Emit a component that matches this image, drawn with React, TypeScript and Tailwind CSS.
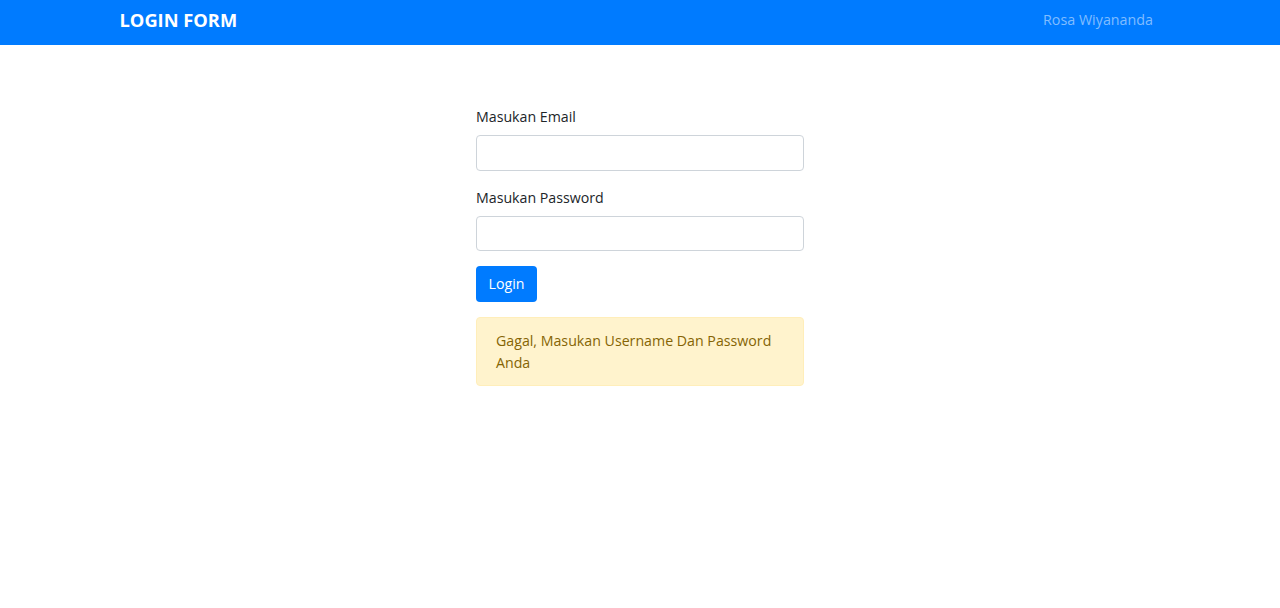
import React from "react";

export default function App() {
  return (
    <div className="min-h-[608px] bg-white text-[#212529] text-[14.2px] leading-[22.5px]" style={{ fontFamily: '"Open Sans", "Noto Sans", sans-serif' }}>
      <nav className="h-[45px] bg-[#007bff]">
        <div className="mx-auto flex h-full w-[1069px] items-center justify-between px-[14px] pb-[5px]">
          <span className="text-[18.3px] font-bold text-white">LOGIN FORM</span>
          <span className="px-[7.5px] text-[14.3px] text-[#80bdff]">Rosa Wiyananda</span>
        </div>
      </nav>
      <div className="flex justify-center pt-[60px]">
        <div className="w-[328px]">
          <div className="mb-[15px]">
            <label className="mb-[6.5px] block pt-[1px]">Masukan Email</label>
            <input type="email" className="block h-[35.6px] w-full rounded-[4px] border border-[#ced4da] bg-white px-[11px] outline-none" />
          </div>
          <div className="mb-[15px]">
            <label className="mb-[6.5px] block pt-[1px]">Masukan Password</label>
            <input type="password" className="block h-[35.6px] w-full rounded-[4px] border border-[#ced4da] bg-white px-[11px] outline-none" />
          </div>
          <button className="mb-[15px] block h-[35.6px] rounded-[4px] bg-[#007bff] px-[12.5px] pt-[1px] text-white">Login</button>
          <div className="rounded-[4px] border border-[#ffeeba] bg-[#fff3cd] px-[19px] pt-[12px] pb-[10px] text-[#856404]">
            Gagal, Masukan Username Dan Password Anda
          </div>
        </div>
      </div>
    </div>
  );
}
